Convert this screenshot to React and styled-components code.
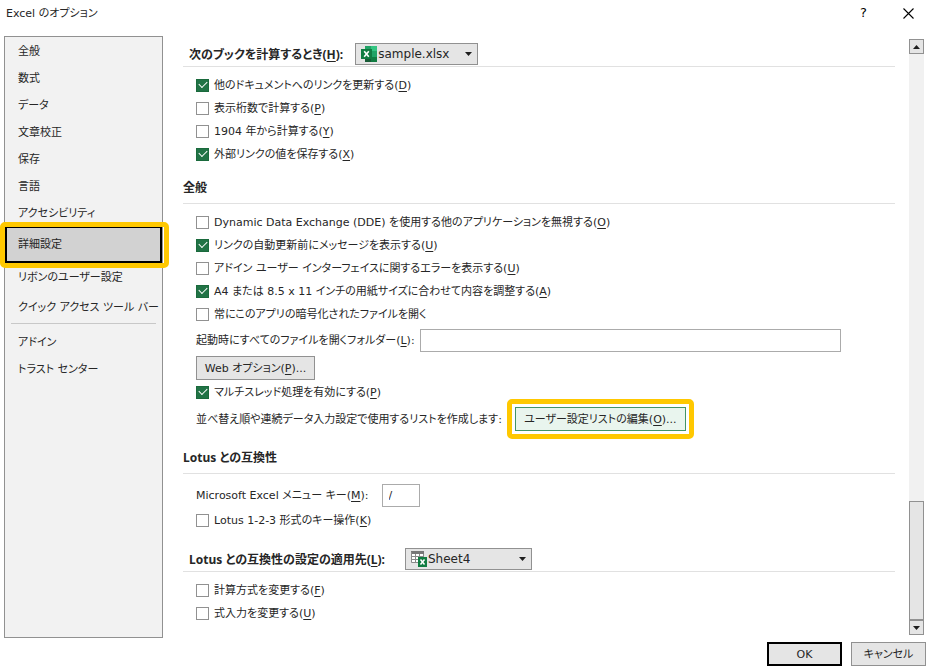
import React, { useState } from 'react';
import styled, { createGlobalStyle, css } from 'styled-components';

const GlobalStyle = createGlobalStyle`
    * {
        box-sizing: border-box;
    }

    body {
        margin: 0;
        background: #fff;
        color: #262626;
    }

    body, button, input, select {
        font-family: 'DejaVu Sans', 'Noto Sans CJK JP', sans-serif;
        font-size: 11px;
        line-height: 16px;
        font-feature-settings: 'palt';
    }

    u {
        text-underline-offset: 2px;
    }
`;

const Window = styled.div`
    display: flex;
    flex-direction: column;
    min-height: 100vh;
    background: #fff;
`;

const TitleBar = styled.header`
    display: flex;
    align-items: center;
    justify-content: space-between;
    height: 36px;
    padding: 0 10px 10px 6px;
`;

const Title = styled.h1`
    margin: 0;
    padding-top: 2px;
    font-size: 11px;
    font-weight: 400;
`;

const WindowButtons = styled.div`
    display: flex;
    gap: 24px;
`;

const WindowButton = styled.button`
    display: flex;
    align-items: center;
    justify-content: center;
    width: 21px;
    height: 20px;
    padding: 0;
    border: 0;
    background: none;
    color: #000;
    font-size: 13px;
`;

const Body = styled.div`
    display: flex;
    flex: 1;
    padding: 0 4px;
`;

const Sidebar = styled.nav`
    flex: 0 0 159px;
    min-width: 0;
    border: 1px solid #919191;
    background: #f2f2f2;
`;

const Highlight = css`
    position: relative;

    &::after {
        content: '';
        position: absolute;
        inset: ${({ $inset }) => $inset};
        border: 5px solid #ffc800;
        border-radius: 5px;
        pointer-events: none;
    }
`;

const NavItem = styled.a`
    display: flex;
    align-items: center;
    height: ${({ $tall }) => ($tall ? 33 : 27)}px;
    padding: 2px 0 0 13px;
    color: inherit;
    text-decoration: none;
    white-space: nowrap;

    ${({ $active }) => $active && css`
        height: 37px;
        padding: 0 0 0 11px;
        border: 2px solid #000;
        background: #d2d2d2;
        ${Highlight}
    `}
`;

const NavDivider = styled.hr`
    margin: 0 6px 4px;
    border: 0;
    border-top: 1px solid #c8c8c8;
`;

const Panel = styled.main`
    flex: 1;
    min-width: 0;
    padding: 7px 14px 8px 20px;
`;

const ScopeHeader = styled.div`
    display: flex;
    align-items: flex-start;
    gap: ${({ $gap }) => $gap}px;
    height: 24px;
    margin-top: ${({ $spaced }) => ($spaced ? 16 : 0)}px;
    padding-left: 6px;
    border-bottom: 1px solid #e1e1e1;
    font-family: 'Noto Sans', 'Noto Sans CJK JP', sans-serif;
    font-size: 12px;
    font-weight: 700;
    line-height: 23px;
    white-space: nowrap;
`;

const SectionTitle = styled.h2`
    margin: 12px 0 0;
    padding-bottom: 6px;
    border-bottom: 1px solid #e1e1e1;
    font-family: 'Noto Sans', 'Noto Sans CJK JP', sans-serif;
    font-size: 12px;
    font-weight: 700;
    line-height: 19px;
`;

const Fields = styled.div`
    padding: 7px 0 0 13px;
`;

const CheckLabel = styled.label`
    display: flex;
    align-items: center;
    gap: 5px;
    height: 23px;
    padding-top: 1px;
    white-space: nowrap;
`;

const CheckBox = styled.input`
    appearance: none;
    flex: none;
    display: grid;
    place-items: center;
    width: 13px;
    height: 13px;
    margin: 0 0 2px;
    border: 1px solid #919191;
    background: #fff;

    &:checked {
        border-color: #1a6a3c;
        background: #217346;
    }

    &:checked::before {
        content: '';
        width: 7px;
        height: 4px;
        margin-bottom: 3px;
        border: solid #fff;
        border-width: 0 0 1px 1px;
        transform: rotate(-45deg);
    }
`;

const FieldRow = styled.div`
    display: flex;
    align-items: center;
    gap: ${({ $gap }) => $gap}px;
    height: 28px;
    white-space: nowrap;

    label {
        padding-top: 2px;
    }
`;

const ListRow = styled.div`
    display: flex;
    align-items: flex-start;
    gap: 13px;
    height: 32px;
    padding-top: 3px;
    line-height: 26px;
    white-space: nowrap;
`;

const TextBox = styled.input`
    width: ${({ $short }) => ($short ? '38px' : 'auto')};
    flex: ${({ $short }) => ($short ? 'none' : '1')};
    height: 23px;
    margin-right: ${({ $short }) => ($short ? 0 : 54)}px;
    padding: 0 6px;
    border: 1px solid #ababab;
    background: #fff;
    color: inherit;
`;

const Button = styled.button`
    height: 24px;
    min-width: ${({ $width }) => $width || 75}px;
    padding: 2px 7px 0;
    border: 1px solid #919191;
    background: #e5e5e5;
    color: inherit;
    white-space: nowrap;

    ${({ $primary }) => $primary && css`
        border: 2px solid #000;
    `}

    ${({ $hot }) => $hot && css`
        border-color: #439467;
        background: #e9f5ee;
        ${Highlight}
    `}
`;

const ButtonLine = styled.div`
    display: flex;
    padding: 2px 0 1px;
`;

const SelectBox = styled.div`
    position: relative;
    width: ${({ $width }) => $width}px;
    height: 22px;

    svg {
        position: absolute;
        top: 3px;
        left: 6px;
        pointer-events: none;
    }

    svg:last-child {
        top: 9px;
        left: auto;
        right: 6px;
    }
`;

const Select = styled.select`
    appearance: none;
    display: block;
    width: 100%;
    height: 22px;
    padding: 0 20px 0 22px;
    border: 1px solid #919191;
    background: #e5e5e5;
    color: inherit;
    font-size: 12px;
`;

const ScrollBar = styled.div`
    display: flex;
    flex-direction: column;
    width: 15px;
    margin: 3px 1px 3px 0;
    background: #f1f1f1;
`;

const ScrollButton = styled.button`
    display: grid;
    place-items: center;
    width: 15px;
    height: 15px;
    padding: 0;
    border: 1px solid #919191;
    background: #e5e5e5;
`;

const ScrollTrack = styled.div`
    display: flex;
    flex-direction: column;
    justify-content: flex-end;
    flex: 1;
`;

const ScrollThumb = styled.div`
    height: 21%;
    border: 1px solid #919191;
    background: #e5e5e5;
`;

const Footer = styled.footer`
    display: flex;
    justify-content: flex-end;
    gap: 9px;
    padding: 4px 3px;
`;

const Arrow = ({ up }) => (
    <svg width="7" height="4" viewBox="0 0 7 4" aria-hidden="true">
        <path d={up ? 'M0 4 3.5 0 7 4z' : 'M0 0h7L3.5 4z'} fill="#1e1e1e" />
    </svg>
);

const WorkbookIcon = () => (
    <svg width="16" height="16" viewBox="0 0 16 16" aria-hidden="true">
        <path d="M4 0h6v5H4z" fill="#21a366" />
        <path d="M10 0h6v5h-6z" fill="#33c481" />
        <path d="M4 5h6v6H4z" fill="#107c41" />
        <path d="M10 5h6v6h-6z" fill="#21a366" />
        <path d="M4 11h12v5H4z" fill="#185c37" />
        <path d="M10 11h6v5h-6z" fill="#107c41" />
        <path d="M0 3h11v10H0z" fill="#107c41" />
        <path d="m3.2 5.2 4.6 5.6M7.8 5.2l-4.6 5.6" stroke="#fff" strokeWidth="1.6" />
    </svg>
);

const SheetIcon = () => (
    <svg width="16" height="16" viewBox="0 0 16 16" aria-hidden="true">
        <path d="M1 1h12v11H1z" fill="#fff" />
        <path d="M0 0h13v3H0z" fill="#777" />
        <path d="M.5 1v10.5H7M1 5.5h12M1 8.5h6M4.5 3v8.5M8.5 3v3M12.5 3v3" fill="none" stroke="#8a8a8a" />
        <path d="M7 6h9v10H7z" fill="#107c41" />
        <path d="m9.5 8.5 4 5M13.5 8.5l-4 5" stroke="#fff" strokeWidth="1.5" />
    </svg>
);

const Check = ({ children, on }) => {
    const [checked, setChecked] = useState(!!on);

    return (
        <CheckLabel>
            <CheckBox type="checkbox" checked={checked} onChange={() => setChecked(!checked)} />
            <span>{children}</span>
        </CheckLabel>
    );
};

const Picker = ({ id, icon, value, width }) => (
    <SelectBox $width={width}>
        <Select id={id} defaultValue={value}>
            <option>{value}</option>
        </Select>
        {icon}
        <Arrow />
    </SelectBox>
);

const topItems = ['全般', '数式', 'データ', '文章校正', '保存', '言語', 'アクセシビリティ'];
const bottomItems = ['アドイン', 'トラスト センター'];

const App = () => (
    <Window>
        <GlobalStyle />
        <TitleBar>
            <Title>Excel のオプション</Title>
            <WindowButtons>
                <WindowButton aria-label="ヘルプ">?</WindowButton>
                <WindowButton aria-label="閉じる">
                    <svg width="11" height="11" viewBox="0 0 11 11" aria-hidden="true">
                        <path d="m.5.5 10 10M10.5.5l-10 10" stroke="#000" strokeWidth="1.1" />
                    </svg>
                </WindowButton>
            </WindowButtons>
        </TitleBar>

        <Body>
            <Sidebar>
                {topItems.map((item) => <NavItem href="#" key={item}>{item}</NavItem>)}
                <NavItem href="#" $active $inset="-6px -9px -7px -7px" aria-current="page">詳細設定</NavItem>
                <NavItem href="#">リボンのユーザー設定</NavItem>
                <NavItem href="#" $tall>クイック アクセス ツール バー</NavItem>
                <NavDivider />
                {bottomItems.map((item) => <NavItem href="#" key={item}>{item}</NavItem>)}
            </Sidebar>

            <Panel>
                <ScopeHeader $gap={12}>
                    <label htmlFor="book">次のブックを計算するとき(<u>H</u>):</label>
                    <Picker id="book" icon={<WorkbookIcon />} value="sample.xlsx" width={123} />
                </ScopeHeader>
                <Fields>
                    <Check on>他のドキュメントへのリンクを更新する(<u>D</u>)</Check>
                    <Check>表示桁数で計算する(<u>P</u>)</Check>
                    <Check>1904 年から計算する(<u>Y</u>)</Check>
                    <Check on>外部リンクの値を保存する(<u>X</u>)</Check>
                </Fields>

                <SectionTitle>全般</SectionTitle>
                <Fields>
                    <Check>Dynamic Data Exchange (DDE) を使用する他のアプリケーションを無視する(<u>O</u>)</Check>
                    <Check on>リンクの自動更新前にメッセージを表示する(<u>U</u>)</Check>
                    <Check>アドイン ユーザー インターフェイスに関するエラーを表示する(<u>U</u>)</Check>
                    <Check on>A4 または 8.5 x 11 インチの用紙サイズに合わせて内容を調整する(<u>A</u>)</Check>
                    <Check>常にこのアプリの暗号化されたファイルを開く</Check>
                    <FieldRow $gap={5}>
                        <label htmlFor="folder">起動時にすべてのファイルを開くフォルダー(<u>L</u>):</label>
                        <TextBox id="folder" type="text" />
                    </FieldRow>
                    <ButtonLine>
                        <Button $width={119}>Web オプション(<u>P</u>)...</Button>
                    </ButtonLine>
                    <Check on>マルチスレッド処理を有効にする(<u>P</u>)</Check>
                    <ListRow>
                        <span>並べ替え順や連続データ入力設定で使用するリストを作成します:</span>
                        <Button $hot $width={171} $inset="-9px">ユーザー設定リストの編集(<u>O</u>)...</Button>
                    </ListRow>
                </Fields>

                <SectionTitle>Lotus との互換性</SectionTitle>
                <Fields>
                    <FieldRow $gap={13}>
                        <label htmlFor="menu-key">Microsoft Excel メニュー キー(<u>M</u>):</label>
                        <TextBox id="menu-key" type="text" defaultValue="/" $short />
                    </FieldRow>
                    <Check>Lotus 1-2-3 形式のキー操作(<u>K</u>)</Check>
                </Fields>

                <ScopeHeader $gap={20} $spaced>
                    <label htmlFor="sheet">Lotus との互換性の設定の適用先(<u>L</u>):</label>
                    <Picker id="sheet" icon={<SheetIcon />} value="Sheet4" width={127} />
                </ScopeHeader>
                <Fields>
                    <Check>計算方式を変更する(<u>F</u>)</Check>
                    <Check>式入力を変更する(<u>U</u>)</Check>
                </Fields>
            </Panel>

            <ScrollBar>
                <ScrollButton aria-label="上へスクロール"><Arrow up /></ScrollButton>
                <ScrollTrack>
                    <ScrollThumb />
                </ScrollTrack>
                <ScrollButton aria-label="下へスクロール"><Arrow /></ScrollButton>
            </ScrollBar>
        </Body>

        <Footer>
            <Button $primary>OK</Button>
            <Button>キャンセル</Button>
        </Footer>
    </Window>
);

export default App;
